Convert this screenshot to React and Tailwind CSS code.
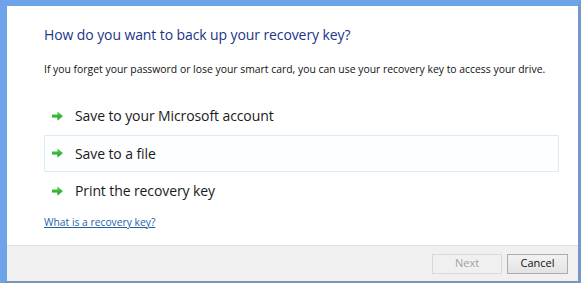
import React from "react";

const Arrow = () => (
  <svg width="13" height="12" viewBox="0 0 13 12" className="shrink-0">
    <defs>
      <linearGradient id="ag" x1="0" y1="0" x2="0" y2="1">
        <stop offset="0" stopColor="#5fd35a" />
        <stop offset="1" stopColor="#129a1c" />
      </linearGradient>
    </defs>
    <path d="M1 4.5h5.4V1.4L11.8 6l-5.4 4.6V7.5H1z" fill="#bfe6bf" opacity="0.5" transform="translate(0.8 0.8)" />
    <path d="M1 4.5h5.4V1.4L11.8 6l-5.4 4.6V7.5H1z" fill="url(#ag)" />
  </svg>
);

const options = [
  { label: "Save to your Microsoft account", selected: false },
  { label: "Save to a file", selected: true },
  { label: "Print the recovery key", selected: false },
];

export default function App() {
  return (
    <div className="w-[584px] h-[289px] bg-white" style={{ fontFamily: '"Open Sans", "Noto Sans", sans-serif' }}>
      <div className="w-[581px] h-[283px] flex flex-col border-l-[7px] border-t-[6px] border-r-[3px] border-b-[2px] border-l-[#6ea3ea] border-t-[#6ea3ea] border-r-[#7399cc] border-b-[#7a95b8]">
        {/* body */}
        <div className="flex-1 flex flex-col pl-[37px] pr-[19px]">
          <h1 className="mt-[19px] text-[14px] leading-[20px] text-[#21358a] tracking-[-0.1px]">
            How do you want to back up your recovery key?
          </h1>
          <p className="mt-[16px] text-[10.4px] leading-[16px] text-[#111] whitespace-nowrap">
            If you forget your password or lose your smart card, you can use your recovery key to access your drive.
          </p>
          <div className="mt-[20px] flex flex-col">
            {options.map((o, i) => (
              <div
                key={i}
                className={`h-[37.5px] flex items-center pl-[6px] gap-[11px] rounded-[1px] border ${
                  o.selected ? "border-[#dcebf3] bg-[#fdfeff]" : "border-transparent"
                }`}
              >
                <Arrow />
                <span className="text-[14px] text-[#1a1a1a] tracking-[-0.1px]">{o.label}</span>
              </div>
            ))}
          </div>
          <a className="mt-[5px] text-[10.3px] leading-[14px] text-[#1f5fa8] underline w-fit cursor-pointer">
            What is a recovery key?
          </a>
        </div>
        {/* footer */}
        <div className="h-[36px] bg-[#f0f0f0] border-t border-[#e3e3e3] flex items-center justify-end gap-[5px] pr-[10px]">
          <button className="w-[70px] h-[20px] border border-[#d9d9d9] bg-[#f0f0f0] text-[11px] text-[#a3a3a3]">
            Next
          </button>
          <button className="w-[61px] h-[20px] border border-[#acacac] bg-gradient-to-b from-[#f2f2f2] to-[#e3e3e3] text-[11px] text-[#111]">
            Cancel
          </button>
        </div>
      </div>
    </div>
  );
}
